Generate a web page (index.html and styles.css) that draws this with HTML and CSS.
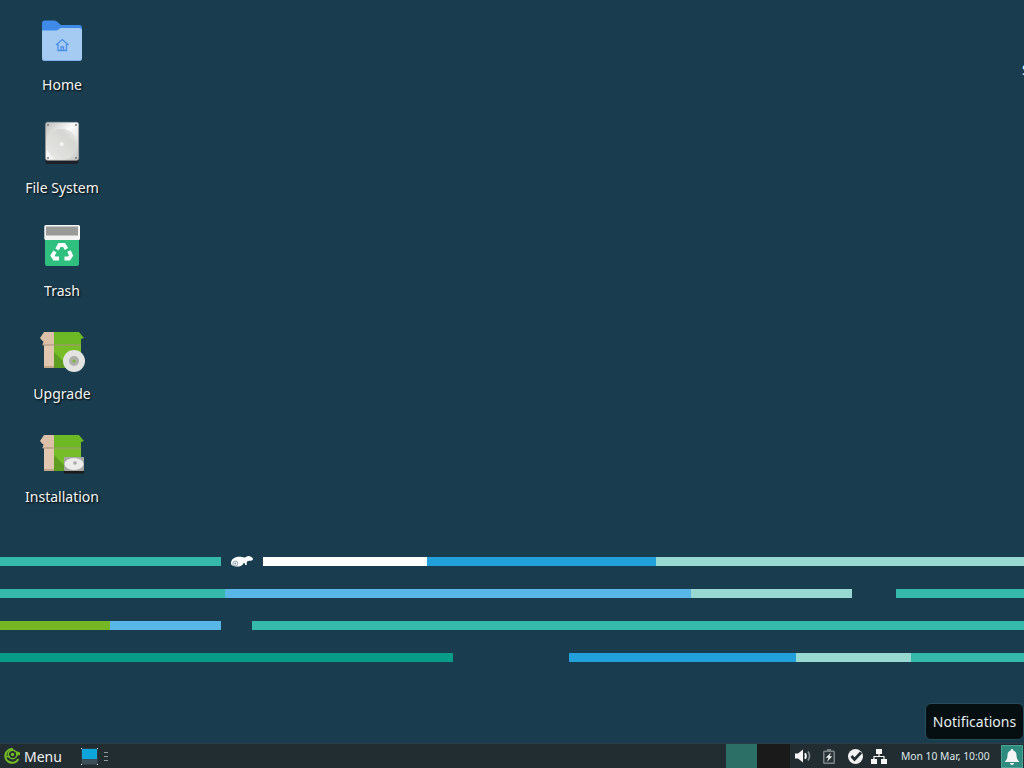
FILE: index.html
```html
<!DOCTYPE html>
<html lang="en">
<head>
<meta charset="utf-8">
<title>Desktop</title>
<link rel="stylesheet" href="styles.css">
</head>
<body>
<main class="desktop">
  <div class="icons">
    <div class="item">
      <svg class="ico" viewBox="0 0 48 48"><path d="M4 6.500a3 3 0 0 1 3-3h9c2 0 3 1 4 2l3 2.500h18a3 3 0 0 1 3 3v8H4z" fill="#3f8ae8"/><path d="M4 13.500h13c2 0 3-.6 4-1.600L23 11h18a3 3 0 0 1 3 3v27a3 3 0 0 1-3 3H7a3 3 0 0 1-3-3z" fill="#a5cbf3"/><path d="M4 40v1a3 3 0 0 0 3 3h34a3 3 0 0 0 3-3v-1a3 3 0 0 1-3 3H7a3 3 0 0 1-3-3z" fill="#7fb0ea"/><path d="M18 28 24.300 22.500 30.500 28M20 26.500V33.500h8.500v-7M23 33.500v-3.500h2.500v3.500" fill="none" stroke="#4a90e8" stroke-width="1.300"/></svg>
      <span class="label">Home</span>
    </div>
    <div class="item">
      <svg class="ico" viewBox="0 0 48 48"><defs><linearGradient id="hd" x1="0" y1="0" x2="1" y2="1"><stop offset="0" stop-color="#bdbdbb"/><stop offset=".45" stop-color="#fcfcfc"/><stop offset="1" stop-color="#c5c5c3"/></linearGradient><linearGradient id="pl" x1="0" y1="1" x2="1" y2="0"><stop offset="0" stop-color="#e9e9e7"/><stop offset=".7" stop-color="#d6d6d3"/><stop offset="1" stop-color="#f3f3f1"/></linearGradient></defs><path d="M7.500 38h33v4a2 2 0 0 1-2 2h-29a2 2 0 0 1-2-2z" fill="#1e2027"/><rect x="7.600" y="2.300" width="33" height="38" rx="2" fill="url(#hd)" stroke="#a5a5a3" stroke-width=".7"/><circle cx="23.700" cy="24.300" r="15.500" fill="url(#pl)"/><circle cx="23.700" cy="24.300" r="2" fill="#f4f4f2"/><circle cx="10" cy="5" r="1" fill="#777"/><circle cx="38" cy="5" r="1" fill="#777"/><circle cx="10" cy="38" r="1" fill="#777"/><circle cx="38" cy="38" r="1" fill="#777"/></svg>
      <span class="label">File System</span>
    </div>
    <div class="item">
      <svg class="ico" viewBox="0 0 48 48"><rect x="7" y="12" width="34" height="31" rx="2" fill="#2fbf7f"/><rect x="6.300" y="2" width="35.700" height="15" rx="1.500" fill="#f4f4f4"/><rect x="8" y="3.500" width="32" height="9" fill="#9a9a98"/><g fill="none" stroke="#fff" stroke-width="3.800"><path d="M19 26.500l2.500-4.500h4.500l2.500 4"/><path d="M31 28l2 4.500-2 3h-4.500"/><path d="M21 35.500h-4.500l-2-3 2.500-4"/></g></svg>
      <span class="label">Trash</span>
    </div>
    <div class="item">
      <svg class="ico" viewBox="0 0 48 48"><defs><g id="box"><path d="M6 6h10v13H4.500l1-4H4.500L2 12z" fill="#dcc0a8"/><path d="M16 6h25l5 6-3 1v6H16z" fill="#6cb825"/><rect x="6" y="19" width="10" height="21" fill="#e1c6b0"/><rect x="6" y="40" width="10" height="2" fill="#c4a689"/><rect x="16" y="19" width="27" height="21" fill="#76bd27"/><rect x="16" y="40" width="27" height="2" fill="#5a9a1c"/><path d="M4.500 18.500h38.500v1H4.500z" fill="#a98f78"/><path d="M16 26l16 16H16z" fill="#5e9e20"/></g></defs><use href="#box"/><circle cx="36" cy="35" r="11" fill="#e3e3e1"/><circle cx="36" cy="35" r="5" fill="#aeaeac"/><circle cx="36" cy="35" r="1.500" fill="#76b82a"/></svg>
      <span class="label">Upgrade</span>
    </div>
    <div class="item">
      <svg class="ico" viewBox="0 0 48 48"><use href="#box"/><rect x="26" y="30" width="20" height="14.500" rx="1" fill="#1b1b1c"/><rect x="26" y="28" width="20" height="14" rx="1" fill="#a8a8a6"/><ellipse cx="36" cy="35" rx="9.500" ry="6" fill="#ececea"/><circle cx="37" cy="34" r="1.800" fill="#a8a8a6"/></svg>
      <span class="label">Installation</span>
    </div>
  </div>

  <div class="stripes">
    <div class="stripe">
      <i class="seg teal" style="width:221px"></i>
      <span class="gap logo-gap" style="width:42px">
        <svg class="gecko" viewBox="0 0 22 12"><path d="M0 7.500C0 3 4 .8 8 .8c3 0 4.500 1 6 .6 1.500-.6 2.500-1.600 4.500-1.200C20.500.6 22 2 22 3c0 1-1.500 1.800-3 1.800-1 0-2.500 0-3 1-.6 1.200-.2 2-.2 3.200h-1.600c0-1-.6-2-1.400-2.500-.6 2-2.300 4-6.300 4C3 10.500 0 9.500 0 7.500z" fill="#fff"/><circle cx="4.300" cy="7.500" r="2.500" fill="none" stroke="#8ea1a8" stroke-width="1"/><circle cx="4.300" cy="7.500" r=".9" fill="#6f858e"/></svg>
      </span>
      <i class="seg white" style="width:164px"></i>
      <i class="seg blue" style="width:229px"></i>
      <i class="seg pale fill"></i>
    </div>
    <div class="stripe">
      <i class="seg teal" style="width:225px"></i>
      <i class="seg sky" style="width:466px"></i>
      <i class="seg pale" style="width:161px"></i>
      <span class="gap" style="width:44px"></span>
      <i class="seg teal fill"></i>
    </div>
    <div class="stripe">
      <i class="seg green" style="width:110px"></i>
      <i class="seg sky" style="width:111px"></i>
      <span class="gap" style="width:31px"></span>
      <i class="seg teal fill"></i>
    </div>
    <div class="stripe">
      <i class="seg deep" style="width:453px"></i>
      <span class="gap" style="width:116px"></span>
      <i class="seg blue" style="width:227px"></i>
      <i class="seg pale" style="width:115px"></i>
      <i class="seg teal fill"></i>
    </div>
  </div>

  <span class="edge-glyph">S</span>
  <div class="tooltip">Notifications</div>
</main>

<footer class="panel">
  <div class="menu">
    <svg class="menu-logo" viewBox="0 0 17 16"><path d="M10 1.200A6.800 6.800 0 1 0 15.300 11" fill="none" stroke="#73ba25" stroke-width="2.200"/><path d="M2 8.500h5" stroke="#73ba25" stroke-width="1.600"/><circle cx="9.500" cy="6.500" r="4.300" fill="none" stroke="#73ba25" stroke-width="1.400"/><circle cx="9.500" cy="6.500" r="1.700" fill="#73ba25"/><path d="M13 3l4 1.500v2.500l-3 .5z" fill="#73ba25"/></svg>
    <span>Menu</span>
  </div>
  <div class="task">
    <svg class="task-icon" viewBox="0 0 17 17"><rect x=".5" y=".5" width="16" height="16" fill="#3a4a52"/><rect x="1" y="1" width="15" height="10" fill="#0ca6dc"/><rect x="1" y="11" width="15" height="5" fill="#3d5059"/><path d="M0 0h1v1H0zM16 0h1v1h-1zM0 16h1v1H0zM16 16h1v1h-1z" fill="#eee"/></svg>
    <span class="grip"><i></i><i></i><i></i></span>
  </div>
  <div class="spring"></div>
  <div class="ws active"></div>
  <div class="ws"></div>
  <div class="tray">
    <svg class="t-vol" viewBox="0 0 16 14"><path d="M0 4.500h3L8 .5v13l-5-4H0z" fill="#f5f5f5"/><path d="M10 4.200c1.100 1.700 1.100 3.900 0 5.600" fill="none" stroke="#f5f5f5" stroke-width="2"/><path d="M13 2.500c1.900 2.800 1.900 6.200 0 9" fill="none" stroke="#8c9396" stroke-width="1.600"/></svg>
    <svg class="t-bat" viewBox="0 0 12 15"><path d="M4 0h4v1.500h2.500A1.500 1.500 0 0 1 12 3v10.500a1.500 1.500 0 0 1-1.500 1.500h-9A1.500 1.500 0 0 1 0 13.500V3a1.500 1.500 0 0 1 1.500-1.500H4z" fill="#7b8386"/><rect x="1.500" y="3" width="9" height="10.500" fill="#2a3438"/><path d="M8 3.500 2.800 8.800h2.700L4 13 9.200 7.300H6.500z" fill="#f2f2f2"/></svg>
    <svg class="t-chk" viewBox="0 0 15 15"><circle cx="7.500" cy="7.500" r="7.500" fill="#f2f2f2"/><path d="M3.500 7 6.500 10.500 13 3.500" fill="none" stroke="#222d32" stroke-width="2.800"/></svg>
    <svg class="t-net" viewBox="0 0 16 15"><path d="M5 0h6v5H5zM0 10h6v5H0zM10 10h6v5h-6z" fill="#f6f6f6"/><path d="M8 5v3M3 10V7.500h10V10" stroke="#f6f6f6" fill="none" stroke-width="1.200"/></svg>
  </div>
  <div class="clock">Mon 10 Mar, 10:00</div>
  <div class="notify">
    <svg class="bell" viewBox="0 0 14 16"><path d="M7 0a1.300 1.300 0 0 1 1.300 1.400C10.500 2 11.500 3.800 11.500 6c0 3 .7 4.600 2.500 6.500V13H0v-.5C1.800 10.600 2.500 9 2.500 6c0-2.200 1-4 3.200-4.600A1.300 1.300 0 0 1 7 0zM5 14h4a2 2 0 0 1-4 0z" fill="#f5f5f5"/></svg>
  </div>
</footer>
</body>
</html>
```
FILE: styles.css
```css
* { box-sizing: border-box; }
html, body { margin: 0; height: 100%; }
body {
  width: 1024px;
  height: 768px;
  overflow: hidden;
  display: flex;
  flex-direction: column;
  background: #193d4f;
  font-family: "Noto Sans", sans-serif;
  color: #fff;
}
.desktop {
  position: relative;
  flex: 1;
  min-height: 0;
  display: flex;
  flex-direction: column;
}
.icons {
  width: 124px;
  height: 557px;
  padding-top: 17px;
  display: flex;
  flex-direction: column;
  align-items: center;
  flex: none;
}
.item {
  height: 103px;
  flex: none;
  width: 100%;
  display: flex;
  flex-direction: column;
  align-items: center;
}
.ico { width: 48px; height: 48px; flex: none; }
.label {
  margin-top: 10px;
  font-size: 14px;
  line-height: 20px;
  color: #f5f5f5;
  text-shadow: 1px 1px 2px #000;
}
.stripes { display: flex; flex-direction: column; gap: 23px; }
.stripe { display: flex; height: 9px; width: 1024px; }
.seg { display: block; height: 100%; flex: none; }
.seg.fill { flex: 1; }
.gap { display: block; flex: none; height: 100%; }
.logo-gap { display: flex; justify-content: center; align-items: center; }
.teal { background: #35b9a9; }
.white { background: #fff; }
.blue { background: #21a0dc; }
.pale { background: #97d8d0; }
.sky { background: #58b7e6; }
.green { background: #75b824; }
.deep { background: #069c85; }
.gecko { width: 22px; height: 12px; flex: none; }
.edge-glyph {
  position: absolute;
  left: 1022px;
  top: 60px;
  font-size: 14px;
  line-height: 20px;
  color: #fff;
}
.tooltip {
  position: absolute;
  left: 925px;
  top: 703px;
  width: 99px;
  height: 37px;
  display: flex;
  align-items: center;
  justify-content: center;
  background: #050e11;
  border: 1px solid #24505c;
  border-radius: 6px;
  font-size: 14px;
  color: #e8eef0;
}
.panel {
  flex: none;
  height: 25px;
  display: flex;
  align-items: stretch;
  background: #222d32;
  border-top: 1px solid #2f3d43;
}
.menu {
  display: flex;
  align-items: center;
  gap: 4px;
  padding-left: 3px;
  width: 81px;
  font-size: 14px;
  color: #f0f0f0;
}
.menu-logo { width: 17px; height: 16px; }
.task { display: flex; align-items: center; gap: 6px; }
.task-icon { width: 17px; height: 17px; }
.grip { display: flex; flex-direction: column; gap: 3px; width: 4px; }
.grip i { display: block; height: 1px; background: #8f9a9e; }
.spring { flex: 1; }
.ws { width: 33px; background: #1a1a1a; }
.ws.active { width: 31px; background: #2b6f66; }
.tray {
  display: flex;
  align-items: center;
  width: 111px;
  padding-left: 5px;
}
.t-vol { width: 16px; height: 14px; }
.t-bat { width: 12px; height: 15px; margin-left: 12px; }
.t-chk { width: 15px; height: 15px; margin-left: 13px; }
.t-net { width: 16px; height: 15px; margin-left: 8px; }
.clock {
  width: 100px;
  display: flex;
  align-items: center;
  font-size: 10.300px;
  color: #dfe6e8;
  white-space: nowrap;
}
.notify {
  width: 22px;
  margin: 1px 1px 0 auto;
  display: flex;
  align-items: center;
  justify-content: center;
  background: #2f8b7e;
  border: 1px solid #4aa596;
}
.bell { width: 14px; height: 16px; }
```
